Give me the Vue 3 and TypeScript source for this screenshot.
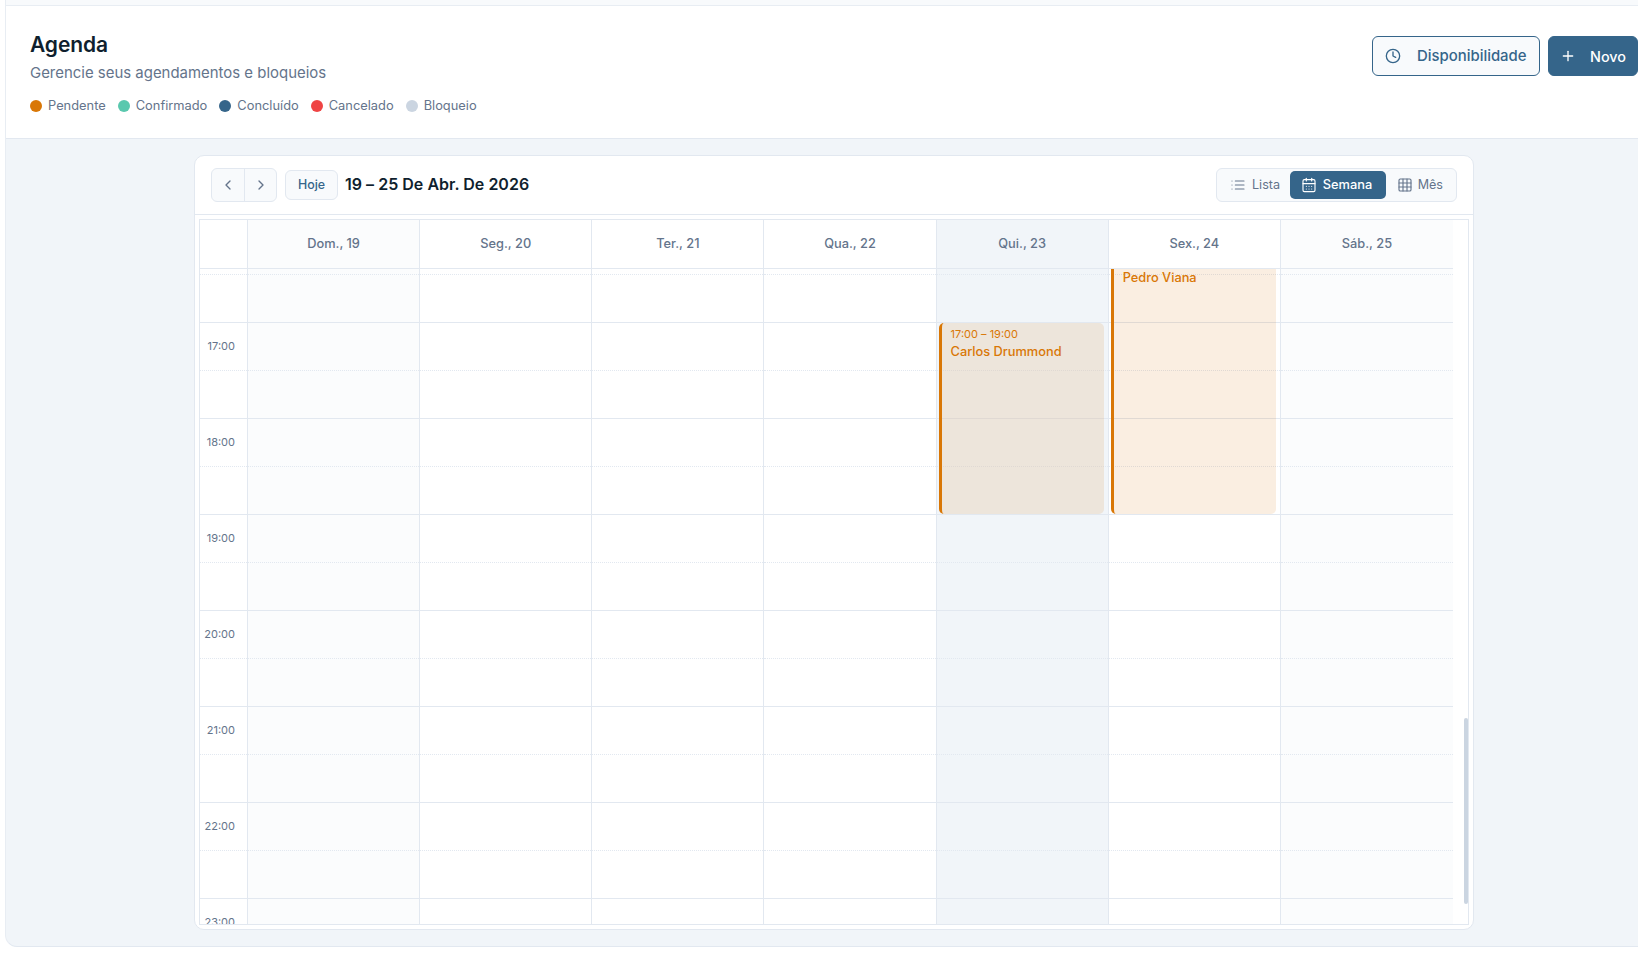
<script setup lang="ts">
interface Ev { time?: string; name: string; cls: string }
interface Day { label: string; kind: '' | 'weekend' | 'today'; events: Ev[] }

const legend = [
  { label: 'Pendente', color: '#d97706' },
  { label: 'Confirmado', color: '#5ac8ae' },
  { label: 'Concluído', color: '#35658a' },
  { label: 'Cancelado', color: '#ef4444' },
  { label: 'Bloqueio', color: '#cbd5e1' },
]

const days: Day[] = [
  { label: 'Dom., 19', kind: 'weekend', events: [] },
  { label: 'Seg., 20', kind: '', events: [] },
  { label: 'Ter., 21', kind: '', events: [] },
  { label: 'Qua., 22', kind: '', events: [] },
  { label: 'Qui., 23', kind: 'today', events: [{ time: '17:00 – 19:00', name: 'Carlos Drummond', cls: 'ev-carlos' }] },
  { label: 'Sex., 24', kind: '', events: [{ name: 'Pedro Viana', cls: 'ev-pedro' }] },
  { label: 'Sáb., 25', kind: 'weekend', events: [] },
]

const slots = ['half', 'hour', 'half', 'hour', 'half', 'hour', 'half', 'hour', 'half', 'hour', 'half', 'hour', 'half', 'hour']
const hours = ['17:00', '18:00', '19:00', '20:00', '21:00', '22:00', '23:00']
</script>

<template>
  <div class="shell">
    <div class="strip"></div>
    <header class="head">
      <div class="head-left">
        <h1 class="title">Agenda</h1>
        <p class="sub">Gerencie seus agendamentos e bloqueios</p>
        <ul class="legend">
          <li v-for="l in legend" :key="l.label" class="legend-item">
            <span class="dot" :style="{ background: l.color }"></span>
            <span>{{ l.label }}</span>
          </li>
        </ul>
      </div>
      <div class="head-actions">
        <button class="btn btn-outline" type="button">
          <svg width="16" height="16" viewBox="0 0 24 24" fill="none" stroke="currentColor" stroke-width="2" stroke-linecap="round" stroke-linejoin="round"><circle cx="12" cy="12" r="10" /><polyline points="12 6 12 12 16 14" /></svg>
          <span>Disponibilidade</span>
        </button>
        <button class="btn btn-solid" type="button">
          <svg width="16" height="16" viewBox="0 0 24 24" fill="none" stroke="currentColor" stroke-width="2" stroke-linecap="round"><path d="M5 12h14" /><path d="M12 5v14" /></svg>
          <span>Novo</span>
        </button>
      </div>
    </header>

    <main class="content">
      <section class="card">
        <div class="toolbar">
          <div class="nav-group">
            <button class="nav-btn" type="button" aria-label="Anterior">
              <svg width="16" height="16" viewBox="0 0 24 24" fill="none" stroke="currentColor" stroke-width="2" stroke-linecap="round" stroke-linejoin="round"><path d="m15 18-6-6 6-6" /></svg>
            </button>
            <button class="nav-btn" type="button" aria-label="Próximo">
              <svg width="16" height="16" viewBox="0 0 24 24" fill="none" stroke="currentColor" stroke-width="2" stroke-linecap="round" stroke-linejoin="round"><path d="m9 18 6-6-6-6" /></svg>
            </button>
          </div>
          <button class="today-btn" type="button">Hoje</button>
          <h2 class="range">19 – 25 De Abr. De 2026</h2>
          <div class="views">
            <button class="view view-list" type="button">
              <svg width="16" height="16" viewBox="0 0 24 24" fill="none" stroke="currentColor" stroke-width="1.7" stroke-linecap="round"><path d="M8 6h13" /><path d="M8 12h13" /><path d="M8 18h13" /><path d="M3 6h.01" /><path d="M3 12h.01" /><path d="M3 18h.01" /></svg>
              <span>Lista</span>
            </button>
            <button class="view view-active" type="button">
              <svg width="16" height="16" viewBox="0 0 24 24" fill="none" stroke="currentColor" stroke-width="1.7" stroke-linecap="round" stroke-linejoin="round"><rect x="3" y="4" width="18" height="18" rx="2" /><path d="M8 2v4" /><path d="M16 2v4" /><path d="M3 10h18" /><path d="M8 14h.01" /><path d="M12 14h.01" /><path d="M16 14h.01" /><path d="M8 18h.01" /><path d="M12 18h.01" /><path d="M16 18h.01" /></svg>
              <span>Semana</span>
            </button>
            <button class="view view-month" type="button">
              <svg width="16" height="16" viewBox="0 0 24 24" fill="none" stroke="currentColor" stroke-width="1.7" stroke-linecap="round" stroke-linejoin="round"><rect x="3" y="3" width="18" height="18" rx="2" /><path d="M3 9h18" /><path d="M3 15h18" /><path d="M9 3v18" /><path d="M15 3v18" /></svg>
              <span>Mês</span>
            </button>
          </div>
        </div>

        <div class="calendar">
          <div class="cal-head">
            <div class="gutter-head"></div>
            <div v-for="d in days" :key="d.label" class="day-head" :class="d.kind">{{ d.label }}</div>
          </div>
          <div class="cal-body">
            <div class="cal-scroll">
              <div class="gutter">
                <div class="first-slot"></div>
                <div v-for="(s, i) in slots" :key="i" class="slot" :class="s">
                  <span v-if="s === 'hour'" class="hour-label">{{ hours[(i - 1) / 2] }}</span>
                </div>
              </div>
              <div v-for="d in days" :key="d.label" class="day-col" :class="d.kind">
                <div class="first-slot"></div>
                <div v-for="(s, i) in slots" :key="i" class="slot" :class="s"></div>
                <article v-for="e in d.events" :key="e.name" class="event" :class="e.cls">
                  <div v-if="e.time" class="ev-time">{{ e.time }}</div>
                  <div class="ev-name">{{ e.name }}</div>
                </article>
              </div>
            </div>
            <div class="thumb"></div>
          </div>
        </div>
      </section>
    </main>
  </div>
</template>

<style>
html, body { margin: 0; background: #ffffff; }
</style>

<style scoped>
* { box-sizing: border-box; }
svg { flex: none; }
.shell {
  height: 947px;
  width: 1633px;
  margin-left: 5px;
  display: flex;
  flex-direction: column;
  background: #f1f5f9;
  border-left: 1px solid #e8edf3;
  border-bottom: 1px solid #e2e8f0;
  border-bottom-left-radius: 12px;
  overflow: hidden;
  font-family: Inter, "Liberation Sans", sans-serif;
  color: #0f172a;
}
.strip {
  height: 6px;
  flex: none;
  background: #f8fafc;
  border-bottom: 1px solid #e8edf3;
}
.head {
  height: 133px;
  flex: none;
  display: flex;
  justify-content: space-between;
  background: #ffffff;
  border-bottom: 1px solid #e2e8f0;
  padding: 23px 0 0 24px;
}
.title {
  margin: 0;
  font-size: 21px;
  line-height: 32px;
  font-weight: 600;
  color: #0f1f2e;
  letter-spacing: -0.1px;
}
.sub {
  margin: 1px 0 0;
  font-size: 14.95px;
  line-height: 22px;
  color: #64748b;
}
.legend {
  list-style: none;
  display: flex;
  gap: 12px;
  margin: 13px 0 0;
  padding: 0;
}
.legend-item {
  display: flex;
  align-items: center;
  gap: 6px;
  font-size: 12.85px;
  line-height: 18px;
  color: #64748b;
}
.dot {
  width: 12px;
  height: 12px;
  border-radius: 50%;
  flex: none;
}
.head-actions {
  display: flex;
  gap: 8px;
  padding-top: 7px;
}
.btn {
  height: 40px;
  display: flex;
  align-items: center;
  font: inherit;
  font-size: 14.9px;
  font-weight: 500;
  border-radius: 6px;
  cursor: pointer;
}
.btn-outline {
  width: 168px;
  padding: 0 12px;
  gap: 16px;
  background: #f8fafc;
  color: #35658a;
  border: 1.2px solid #35658a;
}
.btn-solid {
  width: 90px;
  padding: 0 8px 0 11px;
  gap: 14px;
  font-size: 14.4px;
  background: #35658a;
  color: #ffffff;
  border: 1px solid #35658a;
}
.content {
  flex: 1;
  min-height: 0;
  padding: 16px 0 16px 188px;
}
.card {
  width: 1280px;
  height: 100%;
  display: flex;
  flex-direction: column;
  background: #ffffff;
  border: 1px solid #e2e8f0;
  border-radius: 10px;
  padding: 0 4px 4px;
}
.toolbar {
  height: 59px;
  flex: none;
  margin: 0 -4px;
  padding: 0 16px;
  display: flex;
  align-items: center;
  border-bottom: 1px solid #e2e8f0;
}
.nav-group {
  display: grid;
  grid-template-columns: 33px 31px;
  width: 66px;
  height: 34px;
  background: #f8fafc;
  border: 1px solid #e2e8f0;
  border-radius: 6px;
  overflow: hidden;
}
.nav-btn {
  display: flex;
  align-items: center;
  justify-content: center;
  padding: 0;
  border: 0;
  background: transparent;
  color: #64748b;
}
.nav-btn:first-child { border-right: 1px solid #e2e8f0; }
.today-btn {
  width: 53px;
  height: 30px;
  margin-left: 8px;
  font: inherit;
  font-size: 12.4px;
  font-weight: 500;
  color: #35658a;
  background: #f8fafc;
  border: 1px solid #e2e8f0;
  border-radius: 6px;
  padding: 0 0 1px;
}
.range {
  margin: 0 0 2px 7px;
  font-size: 16px;
  line-height: 24px;
  font-weight: 600;
  color: #0f1f2e;
  letter-spacing: 0.02px;
}
.views {
  margin-left: auto;
  width: 241px;
  height: 34px;
  padding: 2px;
  display: flex;
  justify-content: flex-start;
  align-items: center;
  background: #f8fafc;
  border: 1px solid #e2e8f0;
  border-radius: 6px;
}
.view {
  height: 28px;
  display: flex;
  align-items: center;
  gap: 6px;
  padding: 0 11px;
  font: inherit;
  font-size: 12.6px;
  font-weight: 400;
  color: #64748b;
  background: transparent;
  border: 0;
  border-radius: 5px;
}
.view span { margin-bottom: 1px; }
.view-list {
  width: 71px;
  padding-right: 0;
}
.view-month {
  padding-left: 11px;
  gap: 5px;
}
.view-active {
  width: 96px;
  background: #35658a;
  color: #ffffff;
  font-size: 12.8px;
  font-weight: 500;
}
.calendar {
  flex: 1;
  min-height: 0;
  margin-top: 4px;
  display: flex;
  flex-direction: column;
  border: 1px solid #e2e8f0;
}
.cal-head,
.cal-scroll {
  display: grid;
  grid-template-columns: 48px repeat(7, minmax(0, 1fr)) 15px;
}
.cal-head {
  height: 49px;
  flex: none;
}
.gutter-head {
  border-right: 1px solid #e2e8f0;
  border-bottom: 1px solid #e2e8f0;
}
.day-head {
  display: flex;
  align-items: center;
  justify-content: center;
  padding: 0 0 1px;
  font-size: 12.8px;
  font-weight: 500;
  color: #64748b;
  border-right: 1px solid #e2e8f0;
  border-bottom: 1px solid #e2e8f0;
}
.day-head:last-child { border-right: 0; }
.weekend { background: #fbfcfd; }
.today { background: #f1f5f9; }
.cal-body {
  flex: 1;
  min-height: 0;
  position: relative;
  overflow: hidden;
}
.cal-scroll { margin-top: -43px; }
.gutter { border-right: 1px solid #e2e8f0; }
.hour-label {
  display: block;
  line-height: 46px;
  text-align: right;
  padding-right: 12px;
  font-size: 11px;
  color: #64748b;
}
.day-col {
  position: relative;
  border-right: 1px solid #e2e8f0;
}
.day-col:nth-child(8) { border-right: 0; }
.first-slot { height: 48px; }
.slot { height: 48px; }
.slot.half { border-top: 1px dotted #e2e8f0; }
.slot.hour { border-top: 1px solid #e2e8f0; }
.event {
  position: absolute;
  left: 2px;
  right: 4px;
  border-left: 3px solid #d97706;
  border-radius: 5px;
  background: rgba(217, 119, 6, 0.12);
  color: #d97706;
  padding: 3px 8px 3px 9px;
}
.ev-carlos {
  top: 97px;
  height: 191px;
}
.ev-pedro {
  top: 0;
  height: 288px;
  padding-top: 42px;
}
.ev-time {
  font-size: 11px;
  line-height: 16px;
}
.ev-name {
  font-size: 12.8px;
  line-height: 19px;
  font-weight: 500;
}
.thumb {
  position: absolute;
  right: 0;
  top: 449px;
  width: 4px;
  height: 186px;
  border-radius: 2px;
  background: #cbd5e1;
}
</style>
